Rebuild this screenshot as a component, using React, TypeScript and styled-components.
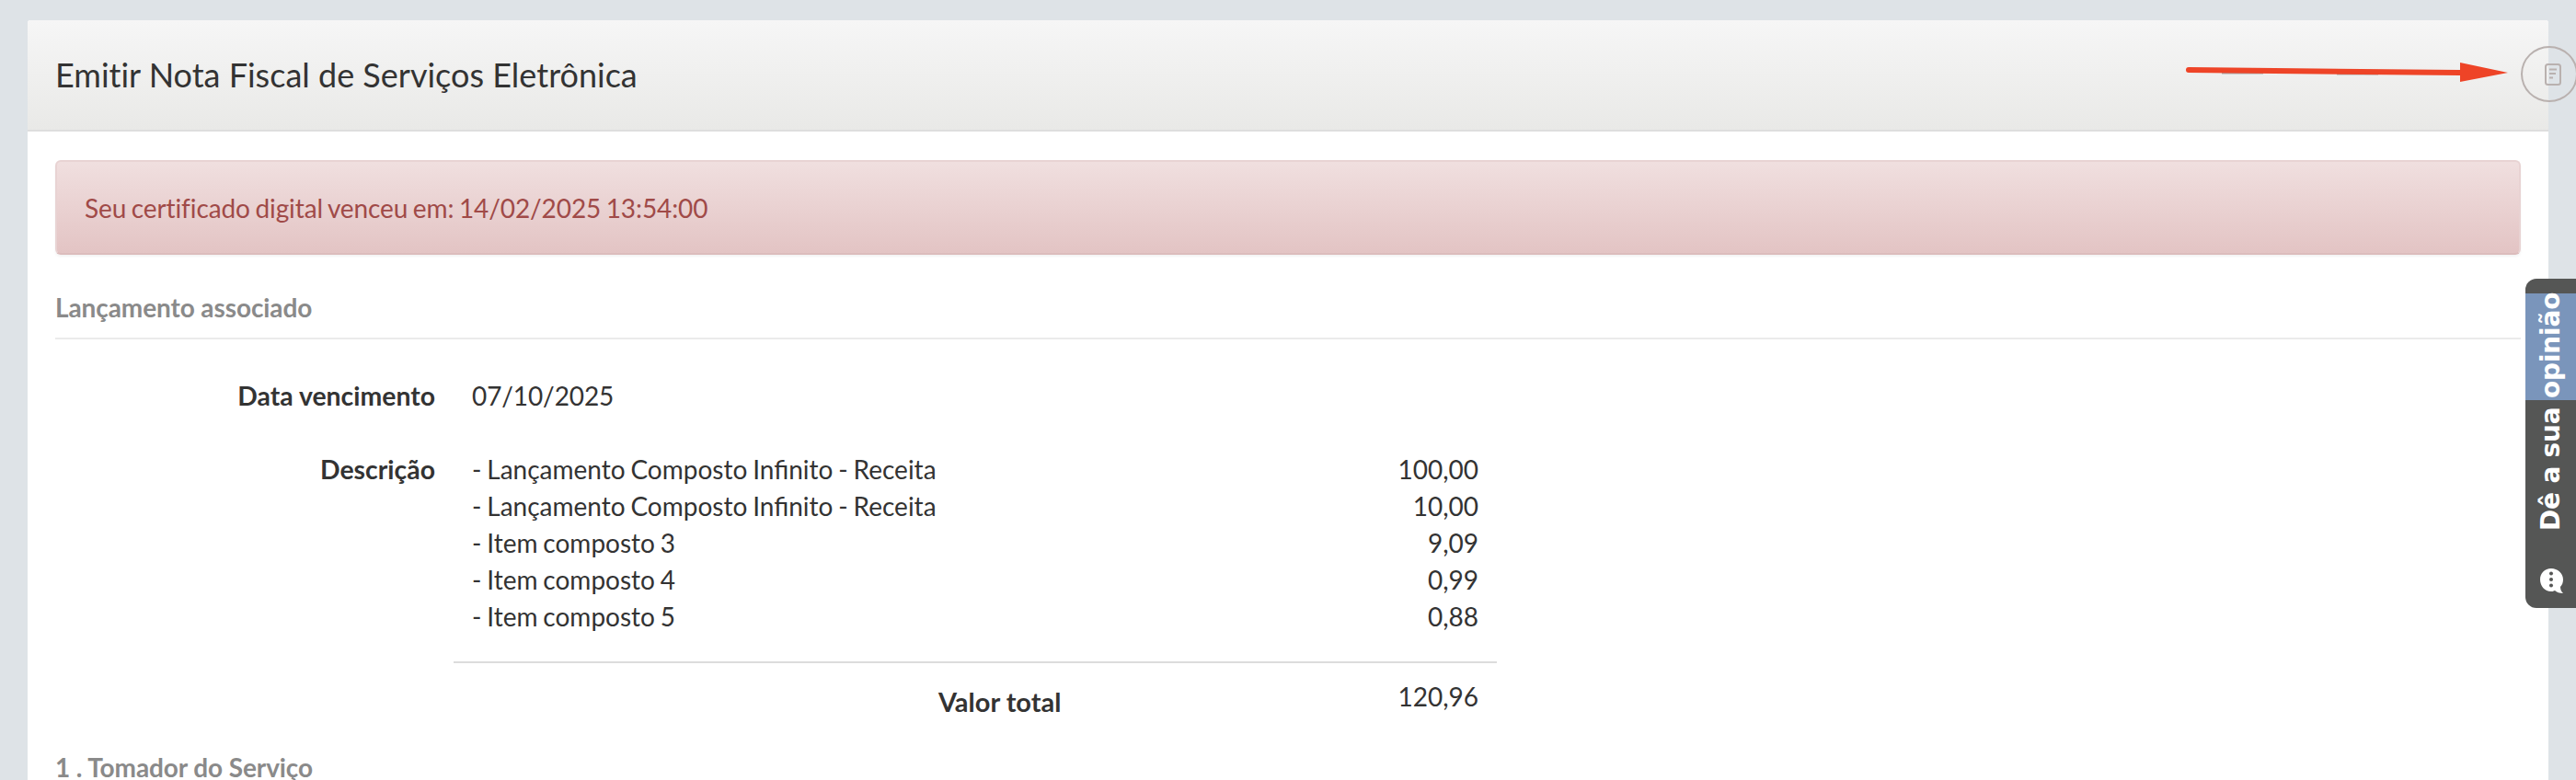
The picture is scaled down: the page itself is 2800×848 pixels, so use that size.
import React from "react";
import styled, { createGlobalStyle } from "styled-components";

const Global = createGlobalStyle`
  html, body { margin: 0; padding: 0; height: 848px; overflow: hidden; background: #dee3e7; }
  body { font-family: Lato, "Liberation Sans", sans-serif; color: #333; }
`;

const Page = styled.div`
  position: relative;
  height: 848px;
  overflow: hidden;
  padding: 22px 30px 0;
  box-sizing: border-box;
`;

const Card = styled.main`
  background: #fff;
  border-radius: 3px 3px 0 0;
  height: 826px;
  overflow: hidden;
`;

const Header = styled.header`
  height: 119px;
  box-sizing: content-box;
  border-bottom: 2px solid #dedede;
  background: linear-gradient(#f6f6f6, #e9e9e7);
  padding: 0 30px;
  display: flex;
  align-items: center;
`;

const Title = styled.h1`
  margin: -2px 0 0;
  font-size: 36px;
  font-weight: 400;
  color: #333;
  font-variant-ligatures: none;
`;

const Body = styled.div`
  padding: 31px 30px 0;
`;

const Alert = styled.div`
  height: 99px;
  border: 2px solid #e8d3d3;
  border-bottom-color: #dcbcbc;
  border-radius: 6px;
  background: linear-gradient(#f0dfdf, #e3c4c4);
  box-shadow: 0 2px 3px rgba(0, 0, 0, 0.05);
  padding: 0 30px;
  display: flex;
  align-items: center;
  font-size: 28px;
  letter-spacing: -0.1px;
  word-spacing: -1.5px;
  color: #a04a48;
`;

const SectionTitle = styled.h2<{ $top: number; $rule?: boolean }>`
  margin: ${(p) => p.$top}px 0 0;
  font-size: 28px;
  line-height: 36px;
  font-weight: 700;
  letter-spacing: -0.1px;
  color: #8a8a8a;
  padding-bottom: ${(p) => (p.$rule ? 15 : 0)}px;
  border-bottom: ${(p) => (p.$rule ? "2px solid #ebebeb" : "none")};
`;

const Field = styled.div<{ $top: number }>`
  display: grid;
  grid-template-columns: 413px 1fr;
  column-gap: 40px;
  margin-top: ${(p) => p.$top}px;
  font-size: 28px;
  line-height: 40px;
`;

const Label = styled.div`
  font-weight: 700;
  font-size: 28.4px;
  text-align: right;
  color: #333;
`;

const Value = styled.div`
  color: #333;
  letter-spacing: -0.1px;
`;

const ItemList = styled.div`
  width: 1094px;
`;

const ItemRow = styled.div`
  display: flex;
  justify-content: space-between;
  height: 40px;
  word-spacing: -1.3px;
`;

const Rule = styled.div`
  width: 1134px;
  margin: 29px 0 0 -20px;
  height: 2px;
  background: #dcdcdc;
`;

const TotalRow = styled.div`
  display: flex;
  justify-content: flex-end;
  margin-top: 16px;
  height: 40px;
`;

const TotalLabel = styled.span`
  margin-right: 366px;
  padding-top: 6px;
  font-weight: 700;
  font-size: 29px;
`;

const TotalValue = styled.span``;

const Arrow = styled.svg`
  position: absolute;
  left: 2370px;
  top: 60px;
`;

const CircleButton = styled.div`
  position: absolute;
  left: 2740px;
  top: 50px;
  width: 62px;
  height: 61px;
  box-sizing: border-box;
  border: 2px solid #b9b1af;
  border-radius: 50%;
  display: flex;
  align-items: center;
  justify-content: center;
  padding-left: 8px;
`;

const Feedback = styled.aside`
  position: absolute;
  left: 2745px;
  top: 303px;
  width: 70px;
  height: 358px;
  border-radius: 12px 0 0 12px;
  background: #555655;
  display: flex;
  flex-direction: column;
  color: #fff;
  overflow: hidden;
`;

const FeedbackLabel = styled.div`
  margin-top: 16px;
  height: 270px;
  width: 55px;
  background: linear-gradient(#7a95bb 116px, #555655 116px);
  display: flex;
  align-items: flex-start;
  justify-content: center;
`;

const FeedbackText = styled.span`
  writing-mode: vertical-rl;
  transform: rotate(180deg);
  font-family: "DejaVu Sans", Verdana, sans-serif;
  font-weight: 700;
  font-size: 28px;
  letter-spacing: -0.2px;
  line-height: 55px;
  height: 258px;
  white-space: nowrap;
  text-align: left;
`;

const FeedbackIcon = styled.svg`
  margin: 28px 0 0 16px;
`;

const items = [
  ["- Lançamento Composto Infinito - Receita", "100,00"],
  ["- Lançamento Composto Infinito - Receita", "10,00"],
  ["- Item composto 3", "9,09"],
  ["- Item composto 4", "0,99"],
  ["- Item composto 5", "0,88"],
];

export default function App() {
  return (
    <Page>
      <Global />
      <Card>
        <Header>
          <Title>Emitir Nota Fiscal de Serviços Eletrônica</Title>
        </Header>
        <Body>
          <Alert>Seu certificado digital venceu em: 14/02/2025 13:54:00</Alert>
          <SectionTitle $top={39} $rule>Lançamento associado</SectionTitle>
          <Field $top={41}>
            <Label>Data vencimento</Label>
            <Value>07/10/2025</Value>
          </Field>
          <Field $top={40}>
            <Label>Descrição</Label>
            <ItemList>
              {items.map(([name, amount], i) => (
                <ItemRow key={i}>
                  <span>{name}</span>
                  <span>{amount}</span>
                </ItemRow>
              ))}
              <Rule />
              <TotalRow>
                <TotalLabel>Valor total</TotalLabel>
                <TotalValue>120,96</TotalValue>
              </TotalRow>
            </ItemList>
          </Field>
          <SectionTitle $top={39}>1 . Tomador do Serviço</SectionTitle>
        </Body>
      </Card>
      <Arrow width="362" height="36" viewBox="0 0 362 36">
        <path d="M45 19.5H90M170 20.5H215" stroke="#a9a9a9" strokeWidth="2" />
        <path d="M9 16L304 19" stroke="#ee4427" strokeWidth="6" strokeLinecap="round" />
        <path d="M304 8L356 19L304 29Z" fill="#ee4427" />
      </Arrow>
      <CircleButton>
        <svg width="18" height="24" viewBox="0 0 18 24" fill="none" stroke="#b9b1af" strokeWidth="2">
          <rect x="1" y="1" width="16" height="22" rx="2.5" />
          <path d="M5 6.5H13M5 11H12M5 15.5H9" />
        </svg>
      </CircleButton>
      <Feedback>
        <FeedbackLabel>
          <FeedbackText>Dê a sua opinião</FeedbackText>
        </FeedbackLabel>
        <FeedbackIcon width="26" height="30" viewBox="0 0 26 30">
          <path d="M12 1C19 1 25 6 25 13C25 16 24 19 22 21C22 24 23 26 25 28C21 28 18 27 16 25C14 26 13 26 12 26C5 26 0 20 0 13C0 6 5 1 12 1Z" fill="#fff" />
          <circle cx="12" cy="6.5" r="2" fill="#555655" />
          <circle cx="12" cy="13" r="2" fill="#555655" />
          <circle cx="12" cy="19.5" r="2" fill="#555655" />
        </FeedbackIcon>
      </Feedback>
    </Page>
  );
}
